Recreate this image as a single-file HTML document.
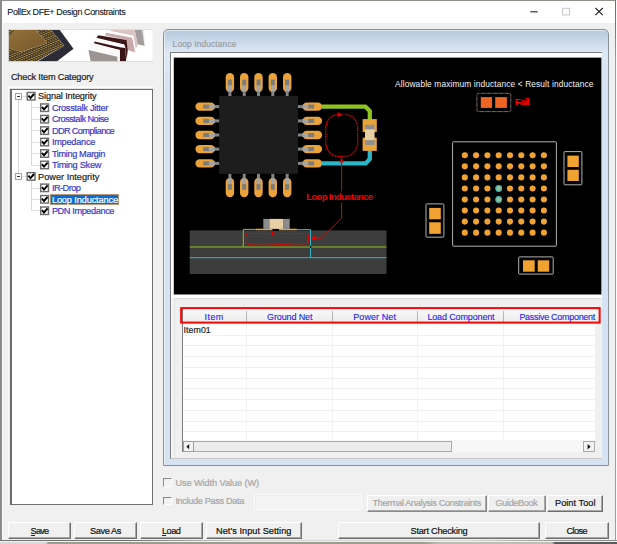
<!DOCTYPE html>
<html><head><meta charset="utf-8"><title>PollEx DFE+ Design Constraints</title>
<style>
html,body{margin:0;padding:0;}
body{width:617px;height:544px;overflow:hidden;position:relative;background:#f0f0f0;font-family:"Liberation Sans",sans-serif;}
.a{position:absolute;box-sizing:border-box;}
.t{position:absolute;white-space:nowrap;font-family:"Liberation Sans",sans-serif;z-index:5;-webkit-text-stroke:0.2px currentColor;}
.btn{position:absolute;box-sizing:border-box;background:#f0f0f0;border-top:1px solid #fff;border-left:1px solid #fff;border-right:1.4px solid #6e6e6e;border-bottom:1.4px solid #6e6e6e;box-shadow:inset -1px -1px 0 #a8a8a8;}
.btn.dis{border-right-color:#8a8a8a;border-bottom-color:#8a8a8a;}
.hl{position:absolute;height:0.8px;background:#dedede;}
.vl{position:absolute;width:0.8px;background:#d8d8d8;}

</style></head>
<body>
<!-- window chrome -->
<div class="a" style="left:0;top:0;width:617px;height:541px;background:#f0f0f0;"></div>
<div class="a" style="left:0;top:0;width:617px;height:1px;background:#8e908a;"></div>
<div class="a" style="left:0;top:0;width:1.6px;height:541px;background:#8c8c8c;"></div>
<div class="a" style="left:614.6px;top:0;width:1.3px;height:541px;background:linear-gradient(to bottom,#707070 0,#747474 24px,#9aa092 60px,#9aa092 100%);"></div>
<div class="a" style="left:615.8px;top:0;width:1.2px;height:544px;background:#fbfbfb;"></div>
<div class="a" style="left:1.6px;top:1px;width:613px;height:21.7px;background:#fff;"></div>
<div class="a" style="left:1.6px;top:22px;width:1.4px;height:518px;background:#fafafa;"></div>
<!-- bottom strip (desktop behind) -->
<div class="a" style="left:0;top:540.4px;width:617px;height:1.1px;background:linear-gradient(to right,#727272 0,#727272 130px,#d6d6d6 250px,#d6d6d6 470px,#9a9a9a 553px,#8a8a8a 617px);"></div>
<div class="a" style="left:0;top:541.5px;width:617px;height:2.5px;background:linear-gradient(to right,#dadada 0,#dadada 46px,#9a9e90 48px,#9a9e90 424px,#bcc0b4 440px,#bcc0b4 552px,#5a5a5a 555px,#5a5a5a 617px);"></div>
<!-- caption buttons -->
<svg class="a" style="left:520px;top:2px;" width="94" height="20" viewBox="0 0 94 20">
  <path d="M10.3 9.8 H17.7" stroke="#222" stroke-width="1.1" fill="none"/>
  <rect x="42.6" y="6.3" width="7" height="6.6" stroke="#c8c8c8" stroke-width="1" fill="none"/>
  <path d="M75.4 6 L82.8 13.2 M82.8 6 L75.4 13.2" stroke="#222" stroke-width="1.1" fill="none"/>
</svg>

<!-- banner -->
<svg class="a" style="left:7.6px;top:28.8px;" width="145.6" height="33" viewBox="0 0 145.6 33">
<defs><pattern id="pins" width="2.6" height="2.2" patternUnits="userSpaceOnUse" patternTransform="rotate(-22) skewX(38)"><rect width="2.6" height="2.2" fill="#3c3222"/><rect x="0.3" y="0.3" width="1.4" height="1.2" fill="#c6a155"/></pattern><linearGradient id="die" x1="0" y1="0" x2="1" y2="1"><stop offset="0" stop-color="#94723c"/><stop offset="1" stop-color="#76562a"/></linearGradient><clipPath id="bn"><rect x="0.6" y="0.7" width="144.4" height="31.8"/></clipPath></defs>
<rect x="0" y="0" width="145.6" height="33" fill="#fff"/>
<g clip-path="url(#bn)">
<polygon points="42.7,0.4 51.4,0.4 65.5,19.8 47.7,33.3 28.0,33.3 56.3,16.7" fill="#2c2c36"/>
<polygon points="-1.6,17.9 13.2,22.8 39.1,14.2 28.0,0.4 42.7,0.4 56.3,16.7 29.2,32.1 -1.6,33.9" fill="url(#pins)"/>
<polygon points="-1.6,0.4 28.0,0.4 39.1,14.2 13.2,22.8 -1.6,18.5" fill="url(#die)"/>
<polygon points="-1.6,0.4 7.0,0.4 3.3,5.6 -1.6,7.4" fill="url(#pins)" opacity="0.8"/>
<polygon points="134.0,0.7 136.0,0.7 136.8,16.9 136.2,16.7" fill="#dfe5ec"/>
<polygon points="126.6,0.7 134.0,0.7 136.5,16.7 129.7,15.4" fill="#a49d9d"/>
<polygon points="103.2,0.7 126.6,0.7 129.7,15.4 127.8,20.4 125.4,6.8 102.0,1.9" fill="#d9c3c3"/>
<polygon points="102.0,1.9 125.4,6.8 127.8,20.4 127.2,23.5 124.1,8.7 97.7,3.7" fill="#fdfbfb"/>
<polygon points="97.7,3.7 124.1,8.7 127.2,23.5 119.8,21.0 118.6,11.1 97.0,6.2" fill="#c9a9aa"/>
<polygon points="90.3,6.2 118.6,11.1 119.8,21.0 118.6,30.5 117.4,19.1 116.1,15.4 88.4,8.7" fill="#3d1717"/>
<polygon points="87.8,9.9 116.1,15.4 117.4,19.1 113.1,18.5 86.6,12.4" fill="#fdfbfb"/>
<polygon points="86.6,12.4 113.1,18.5 117.4,19.1 118.2,33.3 111.8,33.3 111.8,21.0 86.0,14.2" fill="#3a1414"/>
<polygon points="80.4,20.4 83.5,14.8 111.8,21.0 111.8,33.3 109.4,33.3 109.4,27.8" fill="#fbf9f9"/>
<polygon points="80.4,21.0 109.4,27.8 109.4,33.3 82.9,33.3" fill="#9b9493"/>
</g>
<rect x="0.4" y="0.4" width="144.8" height="32.2" fill="none" stroke="#d6d6d6" stroke-width="0.8"/>
</svg>

<!-- tree panel -->
<div class="a" style="left:8.2px;top:86.4px;width:144.8px;height:418.8px;background:#fbfbfb;"></div>
<div class="a" style="left:9.2px;top:87.5px;width:143.8px;height:417.7px;background:#e2e2e2;"></div>
<div class="a" style="left:10.1px;top:88.7px;width:142.9px;height:416.5px;background:#6e6e6e;"></div>
<div class="a" style="left:11.8px;top:90.3px;width:139.8px;height:413.3px;background:#fff;"></div>
<!-- tree lines -->
<div class="vl" style="left:18.0px;top:99.5px;height:73px;"></div>
<div class="vl" style="left:31.0px;top:101px;height:64.2px;"></div>
<div class="vl" style="left:31.0px;top:181px;height:30px;"></div>
<div class="hl" style="left:21.5px;top:95.9px;width:5px;"></div>
<div class="hl" style="left:21.5px;top:176.0px;width:5px;"></div>
<div class="hl" style="left:31px;top:107.3px;width:9px;"></div>
<div class="hl" style="left:31px;top:118.8px;width:9px;"></div>
<div class="hl" style="left:31px;top:130.2px;width:9px;"></div>
<div class="hl" style="left:31px;top:141.7px;width:9px;"></div>
<div class="hl" style="left:31px;top:153.1px;width:9px;"></div>
<div class="hl" style="left:31px;top:164.6px;width:9px;"></div>
<div class="hl" style="left:31px;top:187.5px;width:9px;"></div>
<div class="hl" style="left:31px;top:198.9px;width:9px;"></div>
<div class="hl" style="left:31px;top:210.4px;width:9px;"></div>
<!-- expanders -->
<div class="a" style="left:14.9px;top:92.8px;width:6.8px;height:6.8px;border:1px solid #a4a4a4;background:#fff;"><div class="a" style="left:0.8px;top:1.9px;width:3.4px;height:1.1px;background:#333;"></div></div>
<div class="a" style="left:14.9px;top:172.9px;width:6.8px;height:6.8px;border:1px solid #a4a4a4;background:#fff;"><div class="a" style="left:0.8px;top:1.9px;width:3.4px;height:1.1px;background:#333;"></div></div>
<!-- selection -->
<div class="a" style="left:49.8px;top:193.5px;width:69.6px;height:11.4px;background:#0a6cd4;border:1px solid #b89878;"></div>
<svg class="a" style="left:0;top:0;z-index:3;" width="617" height="544" viewBox="0 0 617 544">
<rect x="27.20" y="92.50" width="7.8" height="7.5" fill="#fff" stroke="#6e6e6e" stroke-width="1.45"/>
<path d="M28.40 95.55 L30.50 97.95 L34.10 93.85" stroke="#000" stroke-width="1.9" fill="none"/>
<rect x="40.70" y="103.95" width="7.8" height="7.5" fill="#fff" stroke="#6e6e6e" stroke-width="1.45"/>
<path d="M41.90 107.00 L44.00 109.40 L47.60 105.30" stroke="#000" stroke-width="1.9" fill="none"/>
<rect x="40.70" y="115.40" width="7.8" height="7.5" fill="#fff" stroke="#6e6e6e" stroke-width="1.45"/>
<path d="M41.90 118.45 L44.00 120.85 L47.60 116.75" stroke="#000" stroke-width="1.9" fill="none"/>
<rect x="40.70" y="126.85" width="7.8" height="7.5" fill="#fff" stroke="#6e6e6e" stroke-width="1.45"/>
<path d="M41.90 129.90 L44.00 132.30 L47.60 128.20" stroke="#000" stroke-width="1.9" fill="none"/>
<rect x="40.70" y="138.30" width="7.8" height="7.5" fill="#fff" stroke="#6e6e6e" stroke-width="1.45"/>
<path d="M41.90 141.35 L44.00 143.75 L47.60 139.65" stroke="#000" stroke-width="1.9" fill="none"/>
<rect x="40.70" y="149.75" width="7.8" height="7.5" fill="#fff" stroke="#6e6e6e" stroke-width="1.45"/>
<path d="M41.90 152.80 L44.00 155.20 L47.60 151.10" stroke="#000" stroke-width="1.9" fill="none"/>
<rect x="40.70" y="161.20" width="7.8" height="7.5" fill="#fff" stroke="#6e6e6e" stroke-width="1.45"/>
<path d="M41.90 164.25 L44.00 166.65 L47.60 162.55" stroke="#000" stroke-width="1.9" fill="none"/>
<rect x="27.20" y="172.65" width="7.8" height="7.5" fill="#fff" stroke="#6e6e6e" stroke-width="1.45"/>
<path d="M28.40 175.70 L30.50 178.10 L34.10 174.00" stroke="#000" stroke-width="1.9" fill="none"/>
<rect x="40.70" y="184.10" width="7.8" height="7.5" fill="#fff" stroke="#6e6e6e" stroke-width="1.45"/>
<path d="M41.90 187.15 L44.00 189.55 L47.60 185.45" stroke="#000" stroke-width="1.9" fill="none"/>
<rect x="40.70" y="195.55" width="7.8" height="7.5" fill="#fff" stroke="#6e6e6e" stroke-width="1.45"/>
<path d="M41.90 198.60 L44.00 201.00 L47.60 196.90" stroke="#000" stroke-width="1.9" fill="none"/>
<rect x="40.70" y="207.00" width="7.8" height="7.5" fill="#fff" stroke="#6e6e6e" stroke-width="1.45"/>
<path d="M41.90 210.05 L44.00 212.45 L47.60 208.35" stroke="#000" stroke-width="1.9" fill="none"/>
</svg>
<!-- MDI-like frame -->
<div class="a" style="left:163.2px;top:29.2px;width:445.4px;height:436.4px;border:1.3px solid #8b9097;border-radius:5px 5px 0 0;background:linear-gradient(to bottom,#b7c9de 0px,#cfdded 14px,#dde8f4 23px,#d6e3f2 60px,#d6e3f2 100%);box-shadow:inset 1px 1px 0 rgba(255,255,255,.55);"></div>
<!-- client area -->
<div class="a" style="left:169.8px;top:51.8px;width:432.2px;height:407.4px;background:#f4f4f4;border-top:1.4px solid #7d7d7d;border-left:1.4px solid #7d7d7d;border-bottom:1px solid #c9c9c9;"></div>
<div class="a" style="left:171.2px;top:53.2px;width:430.4px;height:244.6px;background:#fff;"></div>
<!-- lower pane -->
<div class="a" style="left:174.4px;top:297.6px;width:427px;height:160.6px;background:#f0f0f0;border-top:1px solid #dcdcdc;border-left:1px solid #e2e2e2;"></div>
<!-- list view -->
<div class="a" style="left:181.6px;top:308.8px;width:413.4px;height:143.4px;background:#fff;"></div>
<div class="a" style="left:181.6px;top:308px;width:1.8px;height:144px;background:#7e7e7e;"></div>
<div class="a" style="left:594.9px;top:323px;width:6.4px;height:129px;background:#f0f0f0;"></div>
<!-- header -->
<div class="a" style="left:183px;top:309.6px;width:417px;height:12.4px;background:linear-gradient(#f9f9f9,#ececec);"></div>
<div class="a" style="left:245.9px;top:310.5px;width:1px;height:11px;background:#b8b8b8;"></div>
<div class="a" style="left:331.6px;top:310.5px;width:1px;height:11px;background:#b8b8b8;"></div>
<div class="a" style="left:417.4px;top:310.5px;width:1px;height:11px;background:#b8b8b8;"></div>
<div class="a" style="left:503.1px;top:310.5px;width:1px;height:11px;background:#b8b8b8;"></div>
<div class="a" style="left:183px;top:334.50px;width:412px;height:0.9px;background:#f0f0f0;"></div>
<div class="a" style="left:183px;top:345.25px;width:412px;height:0.9px;background:#f0f0f0;"></div>
<div class="a" style="left:183px;top:356.00px;width:412px;height:0.9px;background:#f0f0f0;"></div>
<div class="a" style="left:183px;top:366.75px;width:412px;height:0.9px;background:#f0f0f0;"></div>
<div class="a" style="left:183px;top:377.50px;width:412px;height:0.9px;background:#f0f0f0;"></div>
<div class="a" style="left:183px;top:388.25px;width:412px;height:0.9px;background:#f0f0f0;"></div>
<div class="a" style="left:183px;top:399.00px;width:412px;height:0.9px;background:#f0f0f0;"></div>
<div class="a" style="left:183px;top:409.75px;width:412px;height:0.9px;background:#f0f0f0;"></div>
<div class="a" style="left:183px;top:420.50px;width:412px;height:0.9px;background:#f0f0f0;"></div>
<div class="a" style="left:183px;top:431.25px;width:412px;height:0.9px;background:#f0f0f0;"></div>
<div class="a" style="left:245.9px;top:323.4px;width:0.9px;height:117px;background:#f3f3f3;"></div>
<div class="a" style="left:331.6px;top:323.4px;width:0.9px;height:117px;background:#f3f3f3;"></div>
<div class="a" style="left:417.4px;top:323.4px;width:0.9px;height:117px;background:#f3f3f3;"></div>
<div class="a" style="left:503.1px;top:323.4px;width:0.9px;height:117px;background:#f3f3f3;"></div>
<!-- h scrollbar -->
<div class="a" style="left:183px;top:440.4px;width:412px;height:11.8px;background:#f7f7f7;"></div>
<div class="a" style="left:194.2px;top:440.6px;width:257.6px;height:11.4px;background:#ececec;border:1px solid #a8a8a8;border-left:none;"></div>
<div class="a" style="left:183px;top:440.6px;width:11.4px;height:11.4px;background:#f2f2f2;border:1px solid #a0a0a0;"></div>
<div class="a" style="left:583px;top:440.6px;width:11.8px;height:11.4px;background:#f2f2f2;border:1px solid #ababab;"></div>
<svg class="a" style="left:183px;top:440.8px;" width="412" height="12" viewBox="0 0 412 12"><path d="M6.2 3.1 L3.4 5.7 L6.2 8.3 Z" fill="#111"/><path d="M404.6 3.1 L407.6 5.8 L404.6 8.5 Z" fill="#111"/></svg>
<!-- red highlight box -->
<svg class="a" style="left:0;top:0;z-index:4;" width="617" height="544" viewBox="0 0 617 544"><rect x="181.15" y="308.1" width="418.5" height="14.5" fill="none" stroke="#fa0808" stroke-width="2.05"/></svg>

<!-- disabled checkboxes -->
<div class="a" style="left:163.3px;top:478.2px;width:8.4px;height:8.6px;background:#f2f2f2;border-top:1.4px solid #8a8a8a;border-left:1.4px solid #8a8a8a;border-right:1px solid #fcfcfc;border-bottom:1px solid #fcfcfc;"></div>
<div class="a" style="left:163.3px;top:496.8px;width:8.4px;height:8.6px;background:#f2f2f2;border-top:1.4px solid #8a8a8a;border-left:1.4px solid #8a8a8a;border-right:1px solid #fcfcfc;border-bottom:1px solid #fcfcfc;"></div>
<!-- disabled edit -->
<div class="a" style="left:253.6px;top:494.4px;width:108.6px;height:15.8px;background:#f3f3f3;border:1px solid #fafafa;box-shadow:inset 1px 1px 0 #ececec;"></div>
<!-- buttons row 1 -->
<div class="btn dis" style="left:367px;top:494.8px;width:119.6px;height:16.8px;"></div>
<div class="btn dis" style="left:488.4px;top:494.8px;width:57.8px;height:16.8px;"></div>
<div class="btn" style="left:547.2px;top:494.8px;width:56.2px;height:16.8px;"></div>
<!-- buttons row 2 -->
<div class="btn" style="left:8.4px;top:522.2px;width:62.4px;height:17px;"></div>
<div class="btn" style="left:74.4px;top:522.2px;width:62.8px;height:17px;"></div>
<div class="btn" style="left:140.4px;top:522.2px;width:62.4px;height:17px;"></div>
<div class="btn" style="left:206.4px;top:522.2px;width:95.6px;height:17px;"></div>
<div class="btn" style="left:338.4px;top:522.2px;width:201.4px;height:17px;"></div>
<div class="btn" style="left:545.2px;top:522.2px;width:63.4px;height:17px;"></div>
<!-- accel underlines -->
<div class="a" style="left:30.5px;top:535.0px;width:4.6px;height:0.8px;background:#222;"></div>
<div class="a" style="left:162.2px;top:535.0px;width:3.6px;height:0.8px;background:#222;"></div>
<svg class="a" style="left:0;top:0;z-index:2;" width="617" height="544" viewBox="0 0 617 544">
<defs><clipPath id="cv"><rect x="173.8" y="57.6" width="427.6" height="236.9"/></clipPath><pattern id="hatch" width="1.4" height="1.4" patternUnits="userSpaceOnUse"><rect width="1.4" height="1.4" fill="#f4722a"/><rect width="0.7" height="0.7" fill="#e8581c"/><rect x="0.7" y="0.7" width="0.7" height="0.7" fill="#e8581c"/></pattern></defs>
<rect x="173.8" y="57.6" width="427.6" height="236.9" fill="#000"/>
<g clip-path="url(#cv)">
<rect x="225.70" y="73.00" width="8.4" height="19.2" rx="4.2" fill="#eaa23a"/>
<rect x="227.90" y="79.6" width="4" height="6" fill="#7c7c7c"/>
<rect x="227.90" y="85.4" width="4" height="6.2" fill="#a4a4a4"/>
<rect x="228.40" y="91.4" width="3" height="5" fill="#858585"/>
<rect x="225.70" y="178.00" width="8.4" height="19.2" rx="4.2" fill="#eaa23a"/>
<rect x="228.40" y="173.5" width="3" height="5" fill="#858585"/>
<rect x="227.90" y="178.2" width="4" height="6.2" fill="#a4a4a4"/>
<rect x="227.90" y="184.2" width="4" height="5.6" fill="#7c7c7c"/>
<rect x="240.00" y="73.00" width="8.4" height="19.2" rx="4.2" fill="#eaa23a"/>
<rect x="242.20" y="79.6" width="4" height="6" fill="#7c7c7c"/>
<rect x="242.20" y="85.4" width="4" height="6.2" fill="#a4a4a4"/>
<rect x="242.70" y="91.4" width="3" height="5" fill="#858585"/>
<rect x="240.00" y="178.00" width="8.4" height="19.2" rx="4.2" fill="#eaa23a"/>
<rect x="242.70" y="173.5" width="3" height="5" fill="#858585"/>
<rect x="242.20" y="178.2" width="4" height="6.2" fill="#a4a4a4"/>
<rect x="242.20" y="184.2" width="4" height="5.6" fill="#7c7c7c"/>
<rect x="254.30" y="73.00" width="8.4" height="19.2" rx="4.2" fill="#eaa23a"/>
<rect x="256.50" y="79.6" width="4" height="6" fill="#7c7c7c"/>
<rect x="256.50" y="85.4" width="4" height="6.2" fill="#a4a4a4"/>
<rect x="257.00" y="91.4" width="3" height="5" fill="#858585"/>
<rect x="254.30" y="178.00" width="8.4" height="19.2" rx="4.2" fill="#eaa23a"/>
<rect x="257.00" y="173.5" width="3" height="5" fill="#858585"/>
<rect x="256.50" y="178.2" width="4" height="6.2" fill="#a4a4a4"/>
<rect x="256.50" y="184.2" width="4" height="5.6" fill="#7c7c7c"/>
<rect x="268.60" y="73.00" width="8.4" height="19.2" rx="4.2" fill="#eaa23a"/>
<rect x="270.80" y="79.6" width="4" height="6" fill="#7c7c7c"/>
<rect x="270.80" y="85.4" width="4" height="6.2" fill="#a4a4a4"/>
<rect x="271.30" y="91.4" width="3" height="5" fill="#858585"/>
<rect x="268.60" y="178.00" width="8.4" height="19.2" rx="4.2" fill="#eaa23a"/>
<rect x="271.30" y="173.5" width="3" height="5" fill="#858585"/>
<rect x="270.80" y="178.2" width="4" height="6.2" fill="#a4a4a4"/>
<rect x="270.80" y="184.2" width="4" height="5.6" fill="#7c7c7c"/>
<rect x="283.00" y="73.00" width="8.4" height="19.2" rx="4.2" fill="#eaa23a"/>
<rect x="285.20" y="79.6" width="4" height="6" fill="#7c7c7c"/>
<rect x="285.20" y="85.4" width="4" height="6.2" fill="#a4a4a4"/>
<rect x="285.70" y="91.4" width="3" height="5" fill="#858585"/>
<rect x="283.00" y="178.00" width="8.4" height="19.2" rx="4.2" fill="#eaa23a"/>
<rect x="285.70" y="173.5" width="3" height="5" fill="#858585"/>
<rect x="285.20" y="178.2" width="4" height="6.2" fill="#a4a4a4"/>
<rect x="285.20" y="184.2" width="4" height="5.6" fill="#7c7c7c"/>
<rect x="195.40" y="102.40" width="19.6" height="8.4" rx="4.2" fill="#eaa23a"/>
<rect x="203.2" y="104.60" width="6" height="4" fill="#7c7c7c"/>
<rect x="209.0" y="104.60" width="6" height="4" fill="#a4a4a4"/>
<rect x="214.8" y="105.10" width="5" height="3" fill="#858585"/>
<rect x="302.50" y="102.40" width="19.6" height="8.4" rx="4.2" fill="#eaa23a"/>
<rect x="297.6" y="105.10" width="5" height="3" fill="#858585"/>
<rect x="302.4" y="104.60" width="6" height="4" fill="#a4a4a4"/>
<rect x="308.2" y="104.60" width="6" height="4" fill="#7c7c7c"/>
<rect x="195.40" y="116.70" width="19.6" height="8.4" rx="4.2" fill="#eaa23a"/>
<rect x="203.2" y="118.90" width="6" height="4" fill="#7c7c7c"/>
<rect x="209.0" y="118.90" width="6" height="4" fill="#a4a4a4"/>
<rect x="214.8" y="119.40" width="5" height="3" fill="#858585"/>
<rect x="302.50" y="116.70" width="19.6" height="8.4" rx="4.2" fill="#eaa23a"/>
<rect x="297.6" y="119.40" width="5" height="3" fill="#858585"/>
<rect x="302.4" y="118.90" width="6" height="4" fill="#a4a4a4"/>
<rect x="308.2" y="118.90" width="6" height="4" fill="#7c7c7c"/>
<rect x="195.40" y="130.80" width="19.6" height="8.4" rx="4.2" fill="#eaa23a"/>
<rect x="203.2" y="133.00" width="6" height="4" fill="#7c7c7c"/>
<rect x="209.0" y="133.00" width="6" height="4" fill="#a4a4a4"/>
<rect x="214.8" y="133.50" width="5" height="3" fill="#858585"/>
<rect x="302.50" y="130.80" width="19.6" height="8.4" rx="4.2" fill="#eaa23a"/>
<rect x="297.6" y="133.50" width="5" height="3" fill="#858585"/>
<rect x="302.4" y="133.00" width="6" height="4" fill="#a4a4a4"/>
<rect x="308.2" y="133.00" width="6" height="4" fill="#7c7c7c"/>
<rect x="195.40" y="144.90" width="19.6" height="8.4" rx="4.2" fill="#eaa23a"/>
<rect x="203.2" y="147.10" width="6" height="4" fill="#7c7c7c"/>
<rect x="209.0" y="147.10" width="6" height="4" fill="#a4a4a4"/>
<rect x="214.8" y="147.60" width="5" height="3" fill="#858585"/>
<rect x="302.50" y="144.90" width="19.6" height="8.4" rx="4.2" fill="#eaa23a"/>
<rect x="297.6" y="147.60" width="5" height="3" fill="#858585"/>
<rect x="302.4" y="147.10" width="6" height="4" fill="#a4a4a4"/>
<rect x="308.2" y="147.10" width="6" height="4" fill="#7c7c7c"/>
<rect x="195.40" y="159.20" width="19.6" height="8.4" rx="4.2" fill="#eaa23a"/>
<rect x="203.2" y="161.40" width="6" height="4" fill="#7c7c7c"/>
<rect x="209.0" y="161.40" width="6" height="4" fill="#a4a4a4"/>
<rect x="214.8" y="161.90" width="5" height="3" fill="#858585"/>
<rect x="302.50" y="159.20" width="19.6" height="8.4" rx="4.2" fill="#eaa23a"/>
<rect x="297.6" y="161.90" width="5" height="3" fill="#858585"/>
<rect x="302.4" y="161.40" width="6" height="4" fill="#a4a4a4"/>
<rect x="308.2" y="161.40" width="6" height="4" fill="#7c7c7c"/>
<rect x="219.2" y="96.0" width="78.8" height="77.8" fill="#1d1d1d"/>
<path d="M321.4 106.7 H365.6 L369.8 110.9 V121" fill="none" stroke="#8fc31f" stroke-width="4.3" stroke-linejoin="round"/>
<path d="M321.4 163.4 H365.6 L369.8 159.0 V149" fill="none" stroke="#2bb7c7" stroke-width="4.3" stroke-linejoin="round"/>
<rect x="362.6" y="119.1" width="14.2" height="13" fill="#eaa23a"/>
<rect x="362.6" y="137.6" width="14.2" height="13.3" fill="#eaa23a"/>
<rect x="365" y="124.8" width="9.6" height="4.8" fill="#909090"/>
<rect x="365" y="129.4" width="9.6" height="11" fill="#e6cfa4"/>
<rect x="365" y="140.2" width="9.6" height="4.8" fill="#909090"/>
<rect x="325.8" y="114.5" width="31.8" height="41.8" rx="12.5" ry="13.5" fill="none" stroke="#f00000" stroke-width="1.25" stroke-dasharray="1.1 0.6"/>
<rect x="342.4" y="113" width="2.4" height="3" fill="#000"/>
<path d="M337.6 112.3 L342.6 114.6 L337.6 116.9 Z" fill="#e00000"/>
<path d="M339.6 162.4 L341.6 157.6 L343.6 162.4 Z" fill="#e00000"/>
<rect x="189.7" y="230.4" width="196.8" height="43.6" fill="#3d3d3d"/>
<path d="M189.7 247 H386.5" stroke="#8fc31f" stroke-width="1" fill="none"/>
<path d="M189.7 257.7 H386.5" stroke="#2bb7c7" stroke-width="1" fill="none"/>
<path d="M243.3 247 V229.4 H256.5" stroke="#8fc31f" stroke-width="1" fill="none"/>
<path d="M310.5 257.7 V229.6 H296.5" stroke="#2bb7c7" stroke-width="1" fill="none"/>
<rect x="256" y="228.7" width="16.6" height="1.5" fill="#eaa23a"/>
<rect x="279" y="228.7" width="17.8" height="1.5" fill="#eaa23a"/>
<rect x="272.6" y="228.7" width="6.4" height="2.2" fill="#050505"/>
<rect x="310.0" y="246.0" width="1.2" height="2" fill="#050505"/>
<rect x="263.3" y="218.9" width="6.6" height="10" fill="#8c8c8c"/>
<rect x="269.6" y="218.9" width="14" height="10" fill="#e6cfa4"/>
<rect x="283.4" y="218.9" width="6.3" height="10" fill="#8c8c8c"/>
<rect x="245.4" y="233.5" width="63" height="10.6" rx="3" fill="none" stroke="#f00000" stroke-width="1.2" stroke-dasharray="1.3 0.6"/>
<rect x="276.4" y="232" width="2.6" height="3" fill="#3d3d3d"/>
<path d="M271.4 231.4 L276.2 233.5 L271.4 235.6 Z" fill="#e00000"/>
<path d="M341.6 160 V191.5 M341.6 202.5 V218.2 L321.4 238.1 H313" fill="none" stroke="#e00000" stroke-width="1"/>
<path d="M315.2 235.8 L310.4 238.1 L315.2 240.4 Z" fill="#ee0000"/>
<rect x="452.6" y="141.8" width="103.8" height="104.4" rx="1" fill="none" stroke="#b0b0b0" stroke-width="1"/>
<circle cx="464.8" cy="155.3" r="3.05" fill="#f0a232"/>
<circle cx="476.1" cy="155.3" r="3.05" fill="#f0a232"/>
<circle cx="487.4" cy="155.3" r="3.05" fill="#f0a232"/>
<circle cx="498.7" cy="155.3" r="3.05" fill="#f0a232"/>
<circle cx="510.0" cy="155.3" r="3.05" fill="#f0a232"/>
<circle cx="521.3" cy="155.3" r="3.05" fill="#f0a232"/>
<circle cx="532.6" cy="155.3" r="3.05" fill="#f0a232"/>
<circle cx="543.9" cy="155.3" r="3.05" fill="#f0a232"/>
<circle cx="464.8" cy="166.35" r="3.05" fill="#f0a232"/>
<circle cx="476.1" cy="166.35" r="3.05" fill="#f0a232"/>
<circle cx="487.4" cy="166.35" r="3.05" fill="#f0a232"/>
<circle cx="498.7" cy="166.35" r="3.05" fill="#f0a232"/>
<circle cx="510.0" cy="166.35" r="3.05" fill="#f0a232"/>
<circle cx="521.3" cy="166.35" r="3.05" fill="#f0a232"/>
<circle cx="532.6" cy="166.35" r="3.05" fill="#f0a232"/>
<circle cx="543.9" cy="166.35" r="3.05" fill="#f0a232"/>
<circle cx="464.8" cy="177.4" r="3.05" fill="#f0a232"/>
<circle cx="476.1" cy="177.4" r="3.05" fill="#f0a232"/>
<circle cx="487.4" cy="177.4" r="3.05" fill="#f0a232"/>
<circle cx="498.7" cy="177.4" r="3.05" fill="#f0a232"/>
<circle cx="510.0" cy="177.4" r="3.05" fill="#f0a232"/>
<circle cx="521.3" cy="177.4" r="3.05" fill="#f0a232"/>
<circle cx="532.6" cy="177.4" r="3.05" fill="#f0a232"/>
<circle cx="543.9" cy="177.4" r="3.05" fill="#f0a232"/>
<circle cx="464.8" cy="188.45" r="3.05" fill="#f0a232"/>
<circle cx="476.1" cy="188.45" r="3.05" fill="#f0a232"/>
<circle cx="487.4" cy="188.45" r="3.05" fill="#f0a232"/>
<circle cx="498.7" cy="188.45" r="2.9" fill="#a4bc8a" stroke="#2fb8b8" stroke-width="1.1"/>
<circle cx="510.0" cy="188.45" r="3.05" fill="#f0a232"/>
<circle cx="521.3" cy="188.45" r="3.05" fill="#f0a232"/>
<circle cx="532.6" cy="188.45" r="3.05" fill="#f0a232"/>
<circle cx="543.9" cy="188.45" r="3.05" fill="#f0a232"/>
<circle cx="464.8" cy="199.5" r="3.05" fill="#f0a232"/>
<circle cx="476.1" cy="199.5" r="3.05" fill="#f0a232"/>
<circle cx="487.4" cy="199.5" r="3.05" fill="#f0a232"/>
<circle cx="498.7" cy="199.5" r="2.9" fill="#a4bc8a" stroke="#2fb8b8" stroke-width="1.1"/>
<circle cx="510.0" cy="199.5" r="3.05" fill="#f0a232"/>
<circle cx="521.3" cy="199.5" r="3.05" fill="#f0a232"/>
<circle cx="532.6" cy="199.5" r="3.05" fill="#f0a232"/>
<circle cx="543.9" cy="199.5" r="3.05" fill="#f0a232"/>
<circle cx="464.8" cy="210.55" r="3.05" fill="#f0a232"/>
<circle cx="476.1" cy="210.55" r="3.05" fill="#f0a232"/>
<circle cx="487.4" cy="210.55" r="3.05" fill="#f0a232"/>
<circle cx="498.7" cy="210.55" r="3.05" fill="#f0a232"/>
<circle cx="510.0" cy="210.55" r="3.05" fill="#f0a232"/>
<circle cx="521.3" cy="210.55" r="3.05" fill="#f0a232"/>
<circle cx="532.6" cy="210.55" r="3.05" fill="#f0a232"/>
<circle cx="543.9" cy="210.55" r="3.05" fill="#f0a232"/>
<circle cx="464.8" cy="221.6" r="3.05" fill="#f0a232"/>
<circle cx="476.1" cy="221.6" r="3.05" fill="#f0a232"/>
<circle cx="487.4" cy="221.6" r="3.05" fill="#f0a232"/>
<circle cx="498.7" cy="221.6" r="3.05" fill="#f0a232"/>
<circle cx="510.0" cy="221.6" r="3.05" fill="#f0a232"/>
<circle cx="521.3" cy="221.6" r="3.05" fill="#f0a232"/>
<circle cx="532.6" cy="221.6" r="3.05" fill="#f0a232"/>
<circle cx="543.9" cy="221.6" r="3.05" fill="#f0a232"/>
<circle cx="464.8" cy="232.65" r="3.05" fill="#f0a232"/>
<circle cx="476.1" cy="232.65" r="3.05" fill="#f0a232"/>
<circle cx="487.4" cy="232.65" r="3.05" fill="#f0a232"/>
<circle cx="498.7" cy="232.65" r="3.05" fill="#f0a232"/>
<circle cx="510.0" cy="232.65" r="3.05" fill="#f0a232"/>
<circle cx="521.3" cy="232.65" r="3.05" fill="#f0a232"/>
<circle cx="532.6" cy="232.65" r="3.05" fill="#f0a232"/>
<circle cx="543.9" cy="232.65" r="3.05" fill="#f0a232"/>
<rect x="564.0" y="151.6" width="17.9" height="33.2" rx="0.8" fill="none" stroke="#b0b0b0" stroke-width="1"/>
<rect x="567.4" y="155.6" width="11.4" height="11.4" fill="#f0a232"/>
<rect x="567.4" y="169.8" width="11.4" height="11.2" fill="#f0a232"/>
<rect x="426.0" y="203.9" width="17.9" height="33.3" rx="0.8" fill="none" stroke="#b0b0b0" stroke-width="1"/>
<rect x="429.2" y="207.9" width="11.6" height="11.4" fill="#f0a232"/>
<rect x="429.2" y="222.3" width="11.6" height="11.5" fill="#f0a232"/>
<rect x="518.7" y="256.9" width="34.5" height="17.2" rx="0.8" fill="none" stroke="#b0b0b0" stroke-width="1"/>
<rect x="523.0" y="260.3" width="11.7" height="11.4" fill="#f0a232"/>
<rect x="537.7" y="260.3" width="11.5" height="11.4" fill="#f0a232"/>
<rect x="476.9" y="93.3" width="33.9" height="18.3" rx="1.5" fill="none" stroke="#b89c9c" stroke-width="1" stroke-dasharray="0.7 0.5"/>
<rect x="480.8" y="97.1" width="11.3" height="10.8" fill="url(#hatch)"/>
<rect x="495.2" y="97.1" width="11.7" height="10.8" fill="url(#hatch)"/>
</g></svg>

<span class="t" style="left:7.30px;top:6.10px;font-size:9.0px;line-height:12px;letter-spacing:-0.394px;color:#111;-webkit-text-stroke:0.08px #111;">PollEx DFE+ Design Constraints</span>
<span class="t" style="left:10.90px;top:71.00px;font-size:9.2px;line-height:12px;letter-spacing:-0.200px;color:#222;">Check Item Category</span>
<span class="t" style="left:38.10px;top:90.45px;font-size:9.2px;line-height:12px;letter-spacing:-0.149px;color:#222;">Signal Integrity</span>
<span class="t" style="left:51.90px;top:101.90px;font-size:9.2px;line-height:12px;letter-spacing:-0.285px;color:#3a3ac8;">Crosstalk Jitter</span>
<span class="t" style="left:51.90px;top:113.35px;font-size:9.2px;line-height:12px;letter-spacing:-0.523px;color:#3a3ac8;">Crosstalk Noise</span>
<span class="t" style="left:51.90px;top:124.80px;font-size:9.2px;line-height:12px;letter-spacing:-0.627px;color:#3a3ac8;">DDR Compliance</span>
<span class="t" style="left:51.90px;top:136.25px;font-size:9.2px;line-height:12px;letter-spacing:-0.241px;color:#3a3ac8;">Impedance</span>
<span class="t" style="left:51.90px;top:147.70px;font-size:9.2px;line-height:12px;letter-spacing:-0.367px;color:#3a3ac8;">Timing Margin</span>
<span class="t" style="left:51.90px;top:159.15px;font-size:9.2px;line-height:12px;letter-spacing:-0.277px;color:#3a3ac8;">Timing Skew</span>
<span class="t" style="left:38.10px;top:170.60px;font-size:9.2px;line-height:12px;letter-spacing:-0.005px;color:#222;">Power Integrity</span>
<span class="t" style="left:51.90px;top:182.05px;font-size:9.2px;line-height:12px;letter-spacing:-0.525px;color:#3a3ac8;">IR-Drop</span>
<span class="t" style="left:51.90px;top:193.50px;font-size:9.2px;line-height:12px;letter-spacing:-0.124px;color:#fff;">Loop Inductance</span>
<span class="t" style="left:51.90px;top:204.95px;font-size:9.2px;line-height:12px;letter-spacing:-0.402px;color:#3a3ac8;">PDN Impedance</span>
<span class="t" style="left:172.60px;top:38.00px;font-size:8.4px;line-height:12px;letter-spacing:0.131px;color:#9a9ea5;">Loop Inductance</span>
<span class="t" style="left:395.10px;top:77.50px;font-size:8.4px;line-height:12px;letter-spacing:0.103px;color:#f4f4f4;-webkit-text-stroke:0;">Allowable maximum inductance &lt; Result inductance</span>
<span class="t" style="left:514.70px;top:96.30px;font-size:9.8px;line-height:12px;letter-spacing:-0.648px;color:#f40000;font-weight:bold;-webkit-text-stroke:0.15px #f40000;">Fail</span>
<span class="t" style="left:306.30px;top:190.80px;font-size:9.4px;line-height:12px;letter-spacing:-0.587px;color:#f00000;font-weight:bold;-webkit-text-stroke:0;">Loop Inductance</span>
<span class="t" style="left:204.60px;top:310.90px;font-size:9.0px;line-height:12px;letter-spacing:0.421px;color:#2222ee;-webkit-text-stroke:0.1px #2222ee;">Item</span>
<span class="t" style="left:267.00px;top:310.90px;font-size:9.0px;line-height:12px;letter-spacing:-0.123px;color:#2222ee;-webkit-text-stroke:0.1px #2222ee;">Ground Net</span>
<span class="t" style="left:353.30px;top:310.90px;font-size:9.0px;line-height:12px;letter-spacing:0.074px;color:#2222ee;-webkit-text-stroke:0.1px #2222ee;">Power Net</span>
<span class="t" style="left:427.40px;top:310.90px;font-size:9.0px;line-height:12px;letter-spacing:-0.140px;color:#2222ee;-webkit-text-stroke:0.1px #2222ee;">Load Component</span>
<span class="t" style="left:519.40px;top:310.90px;font-size:9.0px;line-height:12px;letter-spacing:-0.291px;color:#2222ee;-webkit-text-stroke:0.1px #2222ee;">Passive Component</span>
<span class="t" style="left:183.60px;top:323.50px;font-size:8.8px;line-height:12px;letter-spacing:0.049px;color:#222;">Item01</span>
<span class="t" style="left:175.40px;top:476.60px;font-size:9.2px;line-height:12px;letter-spacing:-0.079px;color:#a6a6a6;">Use Width Value (W)</span>
<span class="t" style="left:175.40px;top:495.40px;font-size:9.2px;line-height:12px;letter-spacing:-0.352px;color:#a6a6a6;">Include Pass Data</span>
<span class="t" style="left:30.50px;top:524.60px;font-size:9.2px;line-height:12px;letter-spacing:-0.738px;color:#111;">Save</span>
<span class="t" style="left:90.00px;top:524.60px;font-size:9.2px;line-height:12px;letter-spacing:-0.388px;color:#111;">Save As</span>
<span class="t" style="left:162.00px;top:524.60px;font-size:9.2px;line-height:12px;letter-spacing:-0.488px;color:#111;">Load</span>
<span class="t" style="left:216.00px;top:524.60px;font-size:9.2px;line-height:12px;letter-spacing:0.037px;color:#111;">Net&#x27;s Input Setting</span>
<span class="t" style="left:410.50px;top:524.60px;font-size:9.2px;line-height:12px;letter-spacing:-0.233px;color:#111;">Start Checking</span>
<span class="t" style="left:566.50px;top:524.60px;font-size:9.2px;line-height:12px;letter-spacing:-0.600px;color:#111;">Close</span>
<span class="t" style="left:372.50px;top:496.80px;font-size:9.2px;line-height:12px;letter-spacing:-0.374px;color:#a6a6a6;">Thermal Analysis Constraints</span>
<span class="t" style="left:495.50px;top:496.80px;font-size:9.2px;line-height:12px;letter-spacing:-0.385px;color:#a6a6a6;">GuideBook</span>
<span class="t" style="left:555.00px;top:496.80px;font-size:9.2px;line-height:12px;letter-spacing:0.031px;color:#111;">Point Tool</span>
</body></html>
